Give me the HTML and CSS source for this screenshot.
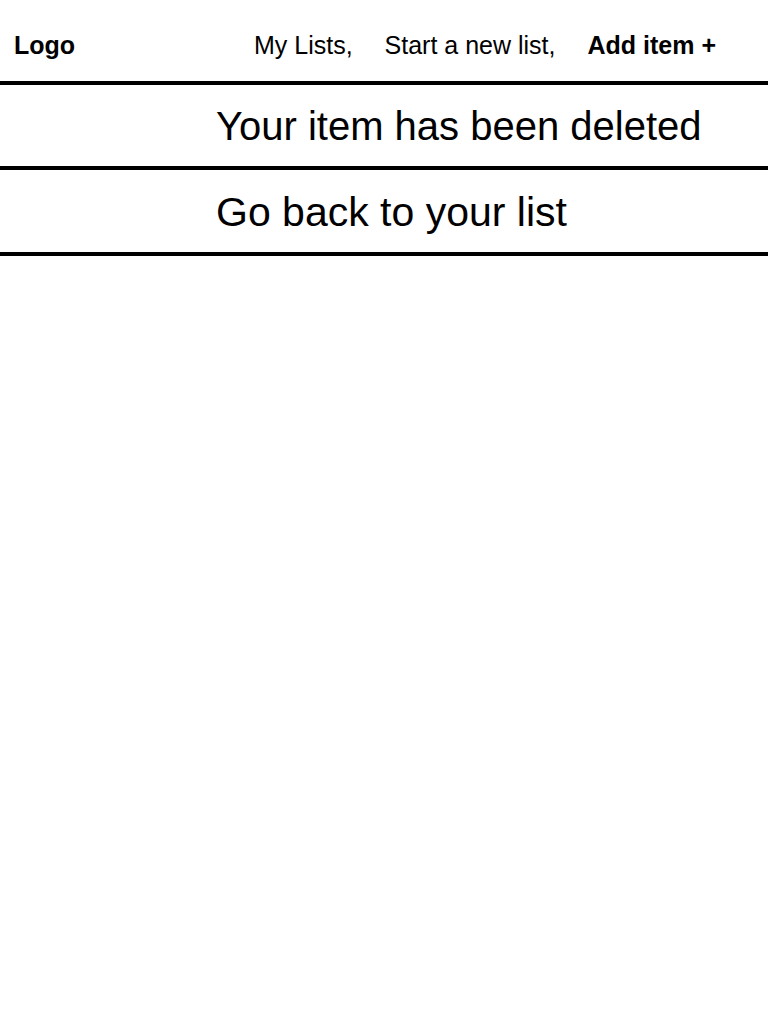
FILE: index.html
```html
<!DOCTYPE html>
<html lang="en">
<head>
<meta charset="utf-8">
<title>Item deleted</title>
<link rel="stylesheet" href="styles.css">
</head>
<body>
<header class="topbar">
  <div class="logo">Logo</div>
  <nav class="nav">
    <a class="nav-link" href="#">My Lists,</a>
    <a class="nav-link" href="#">Start a new list,</a>
    <a class="nav-link nav-add" href="#">Add item +</a>
  </nav>
</header>
<main class="content">
  <div class="row">Your item has been deleted</div>
  <a class="row row-link" href="#">Go back to your list</a>
</main>
</body>
</html>
```
FILE: styles.css
```css
html, body {
  margin: 0;
  padding: 0;
  background: #fff;
}
body {
  font-family: "Liberation Sans", Arial, Helvetica, sans-serif;
  color: #000;
}
.topbar {
  display: flex;
  align-items: flex-start;
  padding: 33px 52px 23px 14px;
  border-bottom: 4px solid #000;
  font-size: 25px;
  line-height: 25px;
}
.logo {
  font-weight: bold;
}
.nav {
  margin-left: auto;
  display: flex;
  gap: 32px;
}
.nav-link {
  color: #000;
  text-decoration: none;
}
.nav-add {
  font-weight: bold;
}
.content {
  display: flex;
  flex-direction: column;
}
.row {
  display: block;
  padding: 21px 0 20px 216px;
  border-bottom: 4px solid #000;
  font-size: 40px;
  line-height: 40px;
  color: #000;
  text-decoration: none;
}
.row-link {
  padding-top: 22px;
  padding-bottom: 19px;
  font-size: 41px;
  line-height: 41px;
}
```
